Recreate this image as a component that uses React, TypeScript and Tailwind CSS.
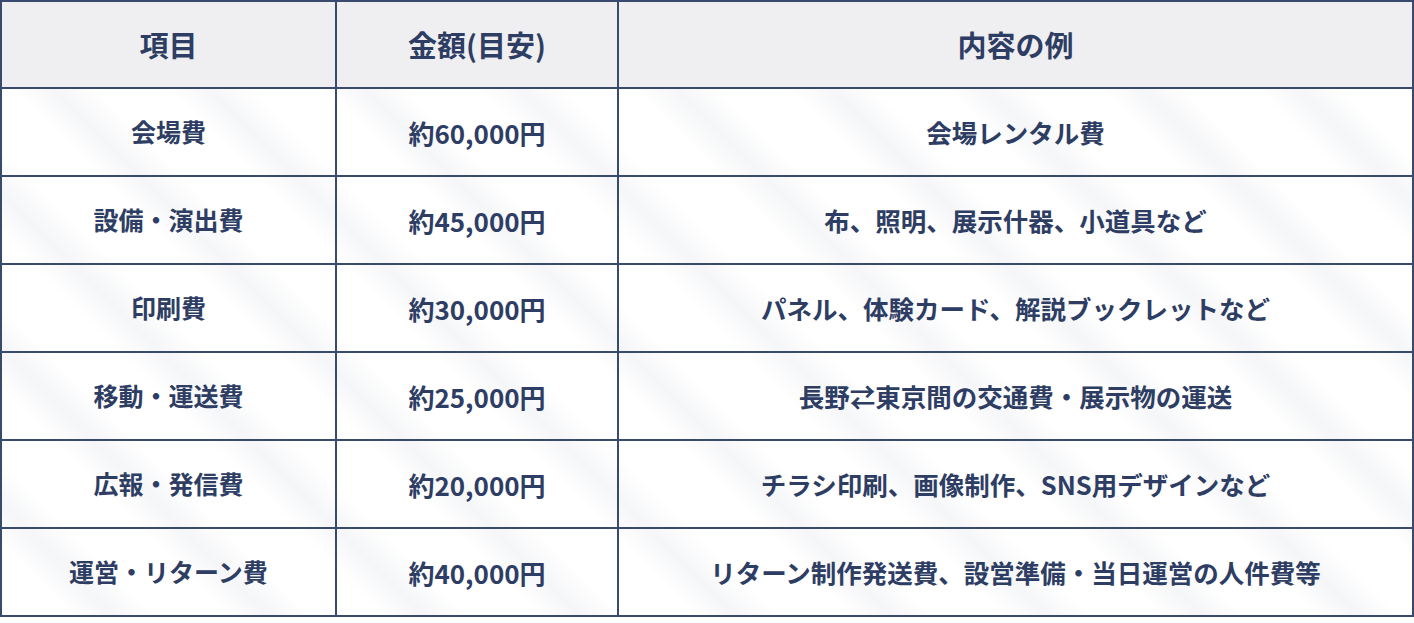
import React from "react";

const rows: [string, string, string][] = [
  ["会場費", "約60,000円", "会場レンタル費"],
  ["設備・演出費", "約45,000円", "布、照明、展示什器、小道具など"],
  ["印刷費", "約30,000円", "パネル、体験カード、解説ブックレットなど"],
  ["移動・運送費", "約25,000円", "長野⇄東京間の交通費・展示物の運送"],
  ["広報・発信費", "約20,000円", "チラシ印刷、画像制作、SNS用デザインなど"],
  ["運営・リターン費", "約40,000円", "リターン制作発送費、設営準備・当日運営の人件費等"],
];

export default function App() {
  const cell =
    "flex items-center justify-center border-r-2 border-b-2 border-[#3a4a6e]";
  return (
    <div className="w-[1414px] h-[623px] bg-white font-['Noto_Sans_CJK_JP','Noto_Sans',sans-serif] text-[#2e3d63]">
      <div className="grid grid-cols-[335px_282px_795px] border-t-2 border-l-2 border-[#3a4a6e] bg-[repeating-linear-gradient(45deg,#ffffff_0px,#ffffff_50px,#f5f6f8_80px,#ffffff_110px)]">
        <div className={`${cell} h-[87px] bg-[#efeff1] text-[29px] font-bold`}>項目</div>
        <div className={`${cell} h-[87px] bg-[#efeff1] text-[29px] font-bold`}>金額(目安)</div>
        <div className={`${cell} h-[87px] bg-[#efeff1] text-[29px] font-bold`}>内容の例</div>
        {rows.map(([a, b, c]) => (
          <React.Fragment key={a}>
            <div className={`${cell} h-[88px] text-[25px] font-bold`}>{a}</div>
            <div className={`${cell} h-[88px] text-[26px] font-semibold`}>{b}</div>
            <div className={`${cell} h-[88px] text-[25.5px] font-bold`}>{c}</div>
          </React.Fragment>
        ))}
      </div>
    </div>
  );
}
